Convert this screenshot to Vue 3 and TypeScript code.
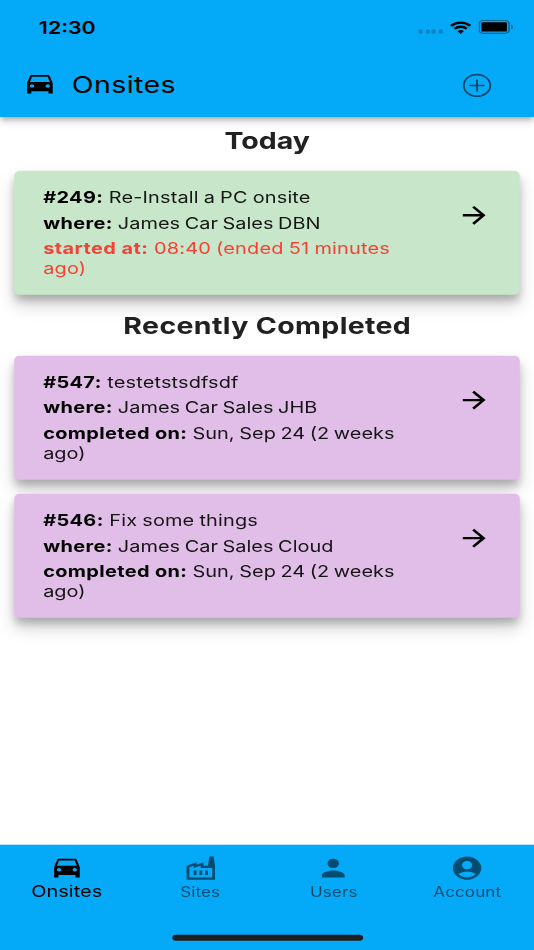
<script setup lang="ts">
interface Job {
  id: number
  title: string
  where: string
  label: string
  time: string
  late?: boolean
}
interface Section {
  heading: string
  tone: string
  jobs: Job[]
}
interface Tab {
  label: string
  icon: string
  active?: boolean
}

const car =
  'M18.92 5.01C18.72 4.42 18.16 4 17.5 4h-11c-.66 0-1.21.42-1.42 1.01L3 11v9h3v-2h12v2h3v-9l-2.08-5.99zM6.5 15c-.83 0-1.5-.67-1.5-1.5S5.67 12 6.5 12s1.5.67 1.5 1.5S7.33 15 6.5 15zm11 0c-.83 0-1.5-.67-1.5-1.5s.67-1.5 1.5-1.5 1.5.67 1.5 1.5-.67 1.5-1.5 1.5zM5 10l1.5-4.5h11L19 10H5z'
const factory =
  'M22 22H2V10l7-3v2l5-2v3h3l1-8h3l1 8v12zM12 9.95l-5 2V10l-3 1.32V20h16v-8h-8V9.95zM11 18h2v-4h-2v4zm-4 0h2v-4H7v4zm10-4h-2v4h2v-4z'
const person =
  'M12 12c2.21 0 4-1.79 4-4s-1.79-4-4-4-4 1.79-4 4 1.79 4 4 4zm0 2c-2.67 0-8 1.34-8 4v2h16v-2c0-2.66-5.33-4-8-4z'
const account =
  'M12 2C6.48 2 2 6.48 2 12s4.48 10 10 10 10-4.48 10-10S17.52 2 12 2zm0 4c1.93 0 3.5 1.57 3.5 3.5S13.93 13 12 13s-3.5-1.57-3.5-3.5S10.07 6 12 6zm0 14c-2.03 0-4.43-.82-6.14-2.88C7.55 15.8 9.68 15 12 15s4.45.8 6.14 2.12C16.43 19.18 14.03 20 12 20z'

const sections: Section[] = [
  {
    heading: 'Today',
    tone: 'green',
    jobs: [
      { id: 249, title: 'Re-Install a PC onsite', where: 'James Car Sales DBN', label: 'started at:', time: '08:40 (ended 51 minutes ago)', late: true },
    ],
  },
  {
    heading: 'Recently Completed',
    tone: 'purple',
    jobs: [
      { id: 547, title: 'testetstsdfsdf', where: 'James Car Sales JHB', label: 'completed on:', time: 'Sun, Sep 24 (2 weeks ago)' },
      { id: 546, title: 'Fix some things', where: 'James Car Sales Cloud', label: 'completed on:', time: 'Sun, Sep 24 (2 weeks ago)' },
    ],
  },
]

const tabs: Tab[] = [
  { label: 'Onsites', icon: car, active: true },
  { label: 'Sites', icon: factory },
  { label: 'Users', icon: person },
  { label: 'Account', icon: account },
]
</script>

<template>
  <div class="viewport">
    <div class="screen">
      <header class="top">
        <div class="status">
          <span class="clock">12:30</span>
          <div class="indicators">
            <span class="dots"><i v-for="n in 4" :key="n"></i></span>
            <svg class="wifi" viewBox="0 0 15 11" width="15" height="11">
              <g fill="none" stroke="#000" stroke-width="2">
                <path d="M.75 4.1A9.6 9.6 0 0 1 14.25 4.1" />
                <path d="M3.2 6.6A6.1 6.1 0 0 1 11.8 6.6" />
              </g>
              <path d="M7.5 11 5.3 8.75A3.2 3.2 0 0 1 9.7 8.75z" />
            </svg>
            <svg class="battery" viewBox="0 0 25 12" width="25" height="12">
              <rect x=".5" y=".5" width="21" height="11" rx="2.8" fill="none" stroke="#000" stroke-opacity=".42" />
              <rect x="2" y="2" width="18" height="8" rx="1" />
              <path d="M23 4v4c.8-.35 1.3-1.1 1.3-2S23.8 4.35 23 4z" fill-opacity=".45" />
            </svg>
          </div>
        </div>
        <div class="appbar">
          <svg viewBox="0 0 24 24" width="24" height="24"><path :d="car" /></svg>
          <h1>Onsites</h1>
          <svg class="add" viewBox="0 0 24 24" width="24" height="24">
            <circle cx="12" cy="12" r="9.3" />
            <path d="M12 7.2v9.6M7.2 12h9.6" />
          </svg>
        </div>
      </header>

      <main>
        <section v-for="s in sections" :key="s.heading">
          <h2>{{ s.heading }}</h2>
          <article v-for="j in s.jobs" :key="j.id" :class="s.tone">
            <div class="details">
              <p><b>#{{ j.id }}:</b> {{ j.title }}</p>
              <p class="tight"><b>where:</b> {{ j.where }}</p>
              <p :class="j.late ? 'late' : 'tight'"><b>{{ j.label }}</b> {{ j.time }}</p>
            </div>
            <svg class="arrow" viewBox="0 0 24 24" width="24" height="24">
              <path d="M12 4l-1.41 1.41L16.17 11H4v2h12.17l-5.58 5.59L12 20l8-8z" />
            </svg>
          </article>
        </section>
      </main>

      <nav>
        <div class="tabs">
          <div v-for="t in tabs" :key="t.label" class="tab" :class="{ active: t.active }">
            <svg viewBox="0 0 24 24" width="24" height="24"><path :d="t.icon" /></svg>
            <span>{{ t.label }}</span>
          </div>
        </div>
        <div class="home"></div>
      </nav>
    </div>
  </div>
</template>

<style>
body {
  margin: 0;
  background: #fff;
}
</style>

<style scoped>
.viewport {
  width: 534px;
  height: 950px;
  overflow: hidden;
}
/* Laid out on a 375 x 812 canvas and stretched to fill the viewport. */
.screen {
  width: 375px;
  height: 812px;
  display: flex;
  flex-direction: column;
  transform: scale(1.424, 1.16995);
  transform-origin: 0 0;
  background: #fff;
  color: #000;
  font-family: Inter, 'Liberation Sans', sans-serif;
}
svg {
  display: block;
  flex: none;
}
.top {
  height: 100px;
  flex: none;
  background: #04a9f8;
  box-shadow: 0 3px 4px -1px rgba(0, 0, 0, 0.24), 0 4px 6px rgba(0, 0, 0, 0.14);
}
.status {
  height: 44px;
  box-sizing: border-box;
  padding: 2.5px 14px 0 27.3px;
  display: flex;
  align-items: center;
  justify-content: space-between;
}
.clock {
  font-size: 15px;
  font-weight: 600;
}
.indicators {
  display: flex;
  align-items: center;
}
.dots {
  display: flex;
  gap: 1.5px;
  padding-top: 7.5px;
  margin-right: 4.9px;
}
.dots i {
  width: 3.2px;
  height: 3.2px;
  border-radius: 1.5px;
  background: rgba(0, 0, 0, 0.22);
}
.wifi {
  margin-right: 5px;
}
.appbar {
  height: 56px;
  display: flex;
  align-items: center;
  padding: 0 28px 0 16px;
}
.appbar h1 {
  margin: 0 auto 0 10.4px;
  font-size: 20px;
  font-weight: 400;
  line-height: 24px;
  letter-spacing: 0.3px;
  transform: translateY(0.6px);
}
.add {
  margin-top: 2.5px;
  fill: none;
  stroke: rgba(0, 0, 0, 0.58);
  stroke-width: 1.3;
  stroke-linecap: round;
}
main {
  flex: 1;
}
h2 {
  margin: 0;
  height: 40px;
  line-height: 40px;
  text-align: center;
  font-size: 20px;
  font-weight: 700;
  letter-spacing: 0.25px;
  text-indent: 0.4px;
  color: #212121;
  transform: translateY(0.4px);
}
section:first-child h2 {
  letter-spacing: 0;
  transform: none;
}
article {
  height: 106px;
  box-sizing: border-box;
  margin: 6px 10px;
  padding: 13px 20px 0 20.3px;
  display: flex;
  justify-content: space-between;
  border-radius: 4px;
  box-shadow: 0 5px 7px -1px rgba(0, 0, 0, 0.22), 0 8px 13px rgba(0, 0, 0, 0.18);
}
article + article {
  margin-top: 12px;
}
.green {
  background: #c8e6c9;
}
.purple {
  background: #e1bee7;
}
.details {
  width: 260px;
  display: flex;
  flex-direction: column;
  gap: 5px;
  transform: translateY(0.4px);
}
p {
  margin: 0;
  font-size: 14px;
  line-height: 17px;
  letter-spacing: 0.1px;
  word-spacing: -0.5px;
  color: rgba(0, 0, 0, 0.9);
}
.tight {
  letter-spacing: 0;
  word-spacing: -0.7px;
}
b {
  font-weight: 700;
  letter-spacing: 0.25px;
  word-spacing: 0;
  margin-right: 0.4px;
  color: #000;
}
.late,
.late b {
  color: #f44336;
}
.late {
  letter-spacing: 0.13px;
}
.late b {
  letter-spacing: 0.3px;
}
.arrow {
  margin-top: 13px;
}
nav {
  height: 90px;
  flex: none;
  box-sizing: border-box;
  padding-bottom: 8px;
  display: flex;
  flex-direction: column;
  justify-content: space-between;
  align-items: center;
  background: #04a9f8;
}
.tabs {
  display: grid;
  grid-template-columns: repeat(4, 1fr);
  width: 100%;
}
.tab {
  display: flex;
  flex-direction: column;
  align-items: center;
  padding-top: 7.6px;
  font-size: 12px;
  line-height: 18px;
  letter-spacing: 0.05px;
  color: rgba(0, 0, 0, 0.54);
}
.tab svg {
  fill: currentColor;
}
.tab.active {
  font-size: 14px;
  letter-spacing: 0;
  line-height: 16px;
  color: #000;
}
.home {
  width: 134px;
  height: 5px;
  border-radius: 2.5px;
  background: #1e1e20;
}
</style>
